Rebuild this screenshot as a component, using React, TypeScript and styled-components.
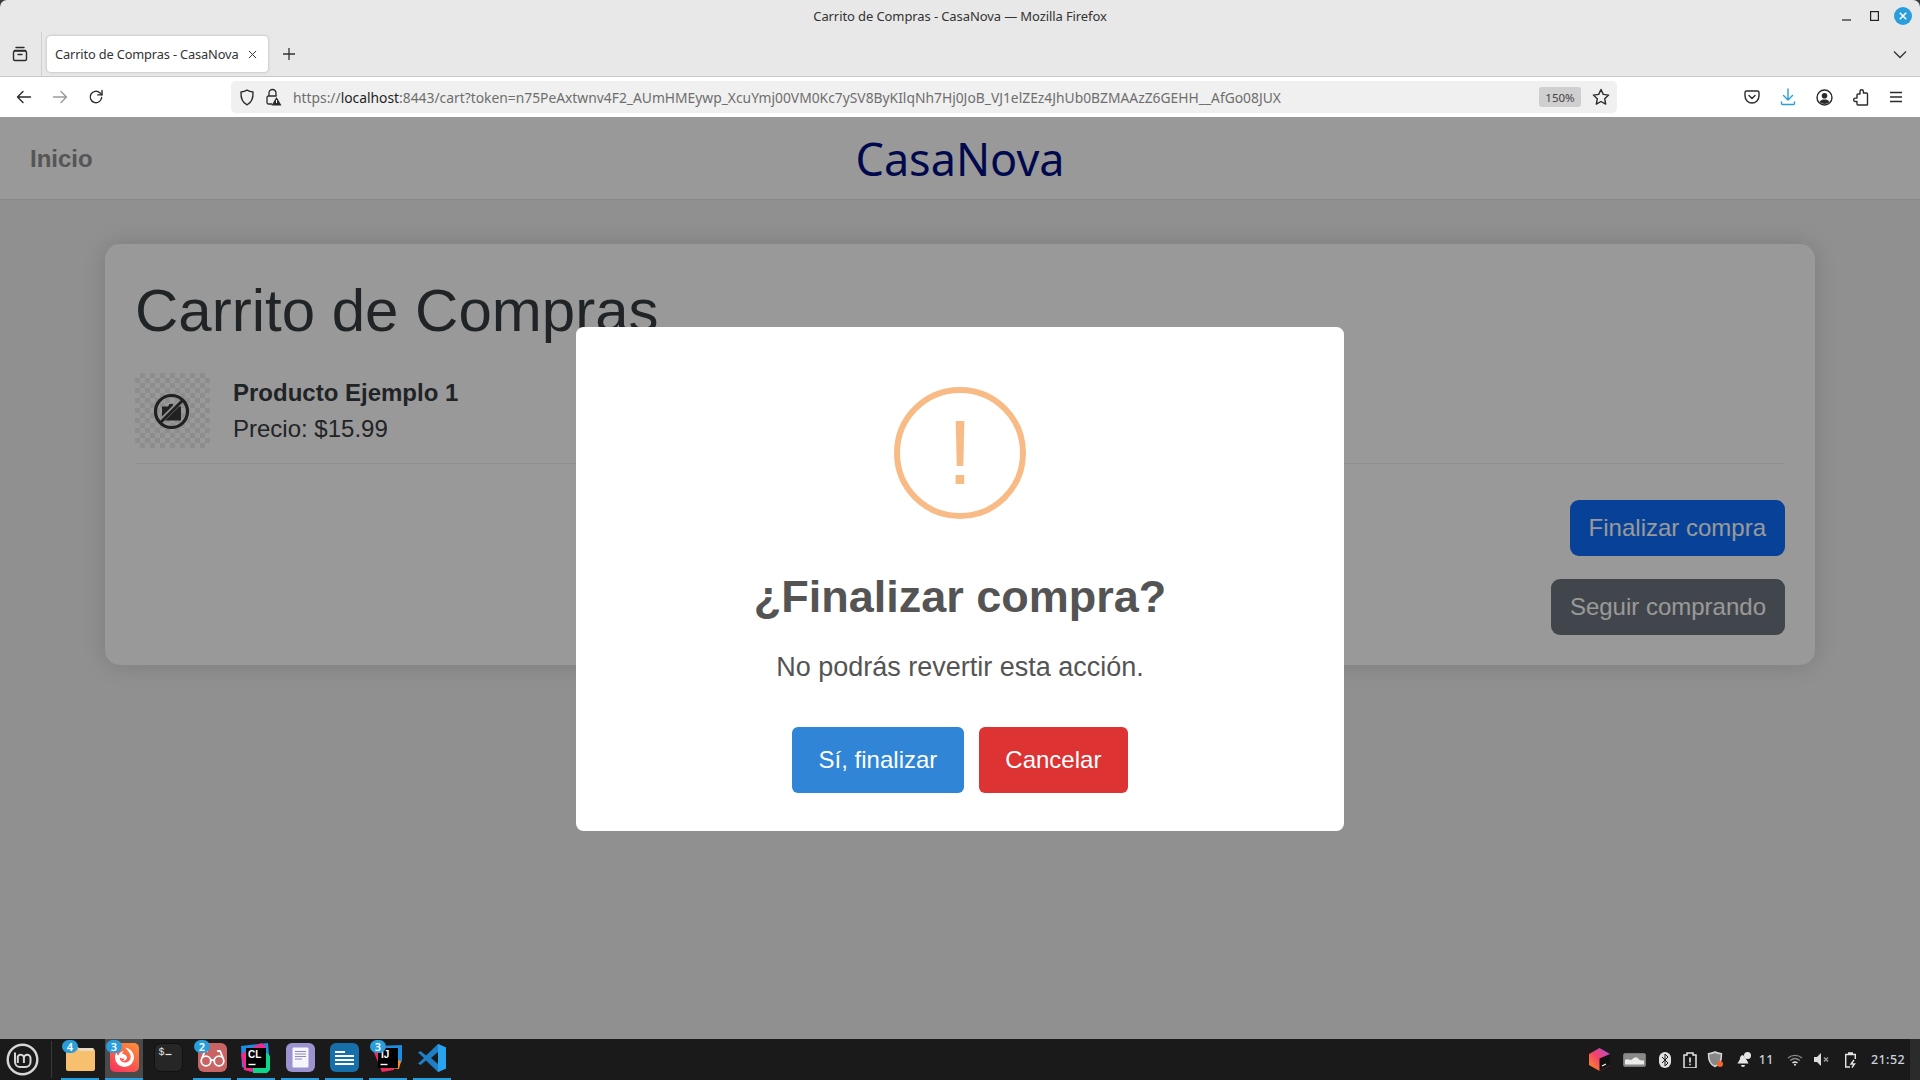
import React from 'react';
import styled, { createGlobalStyle } from 'styled-components';

const GlobalStyle = createGlobalStyle`
  html, body { margin: 0; padding: 0; background: #3a3a3a; }
  * { box-sizing: border-box; }
  #root { width: 1920px; height: 1080px; overflow: hidden; }
`;

const Desktop = styled.div`
  width: 1920px;
  height: 1080px;
  display: flex;
  flex-direction: column;
  font-family: "Liberation Sans", Arial, sans-serif;
`;

/* ---------- browser chrome ---------- */

const BrowserChrome = styled.header`
  flex: none;
  height: 117px;
  background: #e8e8e8;
  border-radius: 7px 7px 0 0;
  font-family: "Noto Sans", sans-serif;
  color: #2b2b2b;
`;

const TitleBar = styled.div`
  height: 32px;
  display: grid;
  grid-template-columns: 1fr auto 1fr;
  align-items: center;
`;

const WindowTitle = styled.div`
  grid-column: 2;
  font-size: 13px;
  letter-spacing: -0.1px;
  color: #333;
`;

const WindowControls = styled.div`
  grid-column: 3;
  justify-self: end;
  display: flex;
  align-items: center;
  gap: 12px;
  padding-right: 8px;
`;

const WindowButton = styled.div`
  width: 16px;
  height: 18px;
  display: flex;
  align-items: center;
  justify-content: center;
`;

const CloseButton = styled.div`
  width: 18px;
  height: 18px;
  border-radius: 50%;
  background: #2a9ddb;
  display: flex;
  align-items: center;
  justify-content: center;
`;

const TabRow = styled.div`
  height: 45px;
  display: flex;
  align-items: flex-start;
  border-bottom: 1px solid #c8c8c8;
`;

const TabsButton = styled.div`
  width: 42px;
  height: 44px;
  padding-right: 2px;
  border-right: 1px solid #cfcfcf;
  display: flex;
  align-items: center;
  justify-content: center;
`;

const Tab = styled.div`
  margin: 4px 0 0 5px;
  width: 221px;
  height: 36px;
  background: #fff;
  border-radius: 4px;
  box-shadow: 0 0 3px rgba(0, 0, 0, 0.25);
  display: flex;
  align-items: center;
  justify-content: space-between;
  padding: 0 11px 0 8px;
  font-size: 12.8px;
  letter-spacing: -0.14px;
  color: #333;
`;

const NewTab = styled.div`
  margin: 4px 0 0 8px;
  width: 26px;
  height: 36px;
  display: flex;
  align-items: center;
  justify-content: center;
`;

const TabListMenu = styled.div`
  margin: 4px 0 0 auto;
  width: 36px;
  height: 36px;
  padding-right: 4px;
  display: flex;
  align-items: center;
  justify-content: center;
`;

const Toolbar = styled.div`
  height: 40px;
  background: #fff;
  display: flex;
  align-items: center;
  justify-content: space-between;
  padding: 0 6px;
`;

const ToolGroup = styled.div`
  display: flex;
  align-items: center;
`;

const ToolButton = styled.div`
  width: 36px;
  height: 36px;
  display: flex;
  align-items: center;
  justify-content: center;
`;

const UrlBar = styled.div`
  width: 1386px;
  height: 32px;
  border-radius: 5px;
  background: #f0f0f0;
  display: flex;
  align-items: center;
  padding: 0 3px;
`;

const UrlIcon = styled.div`
  flex: none;
  width: 26px;
  display: flex;
  align-items: center;
  justify-content: center;
`;

const UrlText = styled.div`
  margin-left: 7px;
  flex: 1;
  font-size: 13.83px;
  white-space: nowrap;
  color: #6e6e6e;
  b { font-weight: 400; color: #1f1f1f; }
`;

const ZoomBadge = styled.div`
  width: 42px;
  height: 20px;
  margin-right: 7px;
  border-radius: 3px;
  background: #cfcfcf;
  font-size: 11.5px;
  color: #444;
  display: flex;
  align-items: center;
  justify-content: center;
`;

/* ---------- shop page ---------- */

const PageArea = styled.div`
  position: relative;
  flex: 1;
  min-height: 0;
  background: #f0f0f0;
`;

const SiteHeader = styled.div`
  height: 83px;
  background: #fff;
  border-bottom: 1px solid #dee2e6;
  display: grid;
  grid-template-columns: 1fr auto 1fr;
  align-items: center;
  padding: 0 30px;
`;

const HomeLink = styled.a`
  display: block;
  padding-top: 2px;
  font-size: 24px;
  font-weight: 700;
  color: #8e8e8e;
`;

const Brand = styled.div`
  font-family: "Noto Sans", sans-serif;
  font-size: 45px;
  line-height: 1;
  color: #001080;
`;

const CartCard = styled.section`
  margin: 44px 105px 0;
  padding: 31px 30px 30px;
  background: #fff;
  border-radius: 15px;
  box-shadow: 0 0 24px rgba(0, 0, 0, 0.14);
`;

const CartTitle = styled.h1`
  margin: 0 0 11px;
  font-size: 60px;
  line-height: 72px;
  font-weight: 400;
  color: #383c40;
`;

const CartItem = styled.div`
  display: flex;
  align-items: center;
  gap: 23px;
  padding: 15px 0;
  border-bottom: 1px solid #eceef0;
  font-size: 24px;
  line-height: 36px;
  color: #383c40;
`;

const ItemThumb = styled.div`
  width: 75px;
  height: 75px;
  padding: 1px 2px 0 0;
  border-radius: 8px;
  background: repeating-conic-gradient(#ececec 0 25%, #fff 0 50%) 0 0 / 10px 10px;
  display: flex;
  align-items: center;
  justify-content: center;
`;

const ItemName = styled.div`
  font-weight: 700;
`;

const CartActions = styled.div`
  margin-top: 36px;
  display: flex;
  flex-direction: column;
  align-items: flex-end;
  gap: 23px;
`;

const CartButton = styled.button<{ $tone: string }>`
  height: 56px;
  padding: 0 19px;
  border: 0;
  border-radius: 9px;
  font: 400 24px "Liberation Sans", Arial, sans-serif;
  color: #fff;
  background: ${(p) => p.$tone};
`;

/* ---------- confirm dialog ---------- */

const Backdrop = styled.div`
  position: absolute;
  inset: 0;
  padding-top: 2px;
  background: rgba(0, 0, 0, 0.4);
  display: flex;
  align-items: center;
  justify-content: center;
`;

const Dialog = styled.div`
  width: 768px;
  padding: 60px 0 38px;
  background: #fff;
  border-radius: 7.5px;
  display: flex;
  flex-direction: column;
  align-items: center;
  color: #545454;
`;

const WarningIcon = styled.div`
  width: 132px;
  height: 132px;
  border: 6px solid #f8bb86;
  border-radius: 50%;
  color: #f8bb86;
  font-size: 90px;
  line-height: 120px;
  text-align: center;
`;

const DialogTitle = styled.h2`
  margin: 52px 0 0;
  font-size: 45px;
  line-height: 52px;
  font-weight: 700;
`;

const DialogText = styled.p`
  margin: 24px 0 0;
  font-size: 27px;
  line-height: 40px;
`;

const DialogActions = styled.div`
  margin-top: 40px;
  display: flex;
  gap: 15px;
`;

const DialogButton = styled.button<{ $tone: string }>`
  height: 66px;
  padding: 0 26.5px;
  border: 0;
  border-radius: 6px;
  font: 400 24px "Liberation Sans", Arial, sans-serif;
  color: #fff;
  background: ${(p) => p.$tone};
`;

/* ---------- taskbar ---------- */

const Taskbar = styled.footer`
  flex: none;
  height: 41px;
  background: #1a1a1a;
  display: flex;
  align-items: stretch;
  font-family: "Noto Sans", sans-serif;
`;

const MenuButton = styled.div`
  width: 52px;
  border-right: 1px solid #3a3a3a;
  margin: 2px 0;
  padding-right: 6px;
  display: flex;
  align-items: center;
  justify-content: center;
`;

const TaskList = styled.div`
  margin-left: 9px;
  display: flex;
  gap: 6px;
`;

const TaskItem = styled.div<{ $open?: boolean; $active?: boolean }>`
  position: relative;
  width: 38px;
  display: flex;
  align-items: center;
  justify-content: center;
  padding-bottom: 2px;
  background: ${(p) => (p.$active ? '#4a4a4a' : 'transparent')};
  border-bottom: 2px solid ${(p) => (p.$open ? '#2a9ddb' : 'transparent')};
`;

const CountBadge = styled.span`
  position: absolute;
  top: 1px;
  left: 1px;
  width: 16px;
  height: 13px;
  border-radius: 7px;
  background: #2a9ddb;
  color: #fff;
  font-size: 11px;
  font-weight: 600;
  line-height: 13px;
  text-align: center;
`;

const Tray = styled.div`
  margin-left: auto;
  display: flex;
  align-items: center;
  color: #c9d3dc;
`;

const TrayItem = styled.div<{ $gap: number }>`
  margin-left: ${(p) => p.$gap}px;
  display: flex;
  align-items: center;
  font-size: 12.5px;
  font-weight: 500;
  letter-spacing: 0.4px;
`;

const TrayEdge = styled.div`
  width: 10px;
  margin-left: 5px;
  align-self: stretch;
  background: #2b2b2b;
`;

/* ---------- icons ---------- */

const Line = { fill: 'none', stroke: '#2b2b2b', strokeWidth: 1.4, strokeLinecap: 'round', strokeLinejoin: 'round' } as const;

const TabsIcon = () => (
  <svg width="18" height="18" viewBox="0 0 18 18" {...Line}>
    <path d="M5 2.5h8M3.5 5.5h11" />
    <rect x="2.5" y="6" width="13" height="9.5" rx="1.5" />
    <path d="M7 9.5h4" />
  </svg>
);
const CrossIcon = ({ size = 10, color = '#333', w = 1.1 }) => (
  <svg width={size} height={size} viewBox="0 0 10 10" fill="none" stroke={color} strokeWidth={w}>
    <path d="M1 1l8 8M9 1l-8 8" />
  </svg>
);
const PlusIcon = () => (
  <svg width="14" height="14" viewBox="0 0 14 14" fill="none" stroke="#333" strokeWidth="1.3">
    <path d="M7 1v12M1 7h12" />
  </svg>
);
const ChevronIcon = () => (
  <svg width="14" height="9" viewBox="0 0 14 9" fill="none" stroke="#333" strokeWidth="1.3">
    <path d="M1 1.5l6 6 6-6" />
  </svg>
);
const ArrowIcon = ({ right = false }) => (
  <svg width="16" height="14" viewBox="0 0 16 14" fill="none" stroke={right ? '#9a9a9a' : '#2b2b2b'} strokeWidth="1.4" strokeLinecap="round" strokeLinejoin="round">
    {right ? <path d="M1.5 7h13M9 1.5L14.5 7 9 12.5" /> : <path d="M14.5 7h-13M7 1.5L1.5 7 7 12.5" />}
  </svg>
);
const ReloadIcon = () => (
  <svg width="16" height="16" viewBox="0 0 16 16" {...Line}>
    <path d="M13.6 8.5a5.7 5.7 0 1 1-1.8-4.7L14 5.8" />
    <path d="M14 1.5v4.4H9.7" />
  </svg>
);
const ShieldIcon = () => (
  <svg width="16" height="17" viewBox="0 0 16 17" {...Line}>
    <path d="M8 1.2c2 1.2 4 1.7 6 1.8.3 5.5-1.4 10.6-6 12.8C3.4 13.6 1.7 8.5 2 3c2-.1 4-.6 6-1.8z" />
  </svg>
);
const LockIcon = () => (
  <svg width="17" height="18" viewBox="0 0 17 18">
    <path d="M4 8V5a3.5 3.5 0 0 1 7 0v3" fill="none" stroke="#2b2b2b" strokeWidth="1.3" />
    <path d="M7 16H3.5A1.5 1.5 0 0 1 2 14.5v-5A1.5 1.5 0 0 1 3.5 8h8" fill="none" stroke="#2b2b2b" strokeWidth="1.3" />
    <path d="M11.5 9l5 8.5h-10z" fill="#2b2b2b" />
    <path d="M11.5 12v3" stroke="#fff" strokeWidth="1" />
  </svg>
);
const StarIcon = () => (
  <svg width="18" height="18" viewBox="0 0 18 18" {...Line}>
    <path d="M9 1.5l2.3 4.9 5.3.7-3.9 3.7 1 5.3L9 13.5l-4.7 2.6 1-5.3-3.900-3.700 5.300-.7z" />
  </svg>
);
const PocketIcon = () => (
  <svg width="16" height="16" viewBox="0 0 16 16" {...Line}>
    <path d="M2.5 2h11A1.5 1.5 0 0 1 15 3.5V7A7 7 0 0 1 1 7V3.5A1.5 1.5 0 0 1 2.5 2z" />
    <path d="M5 6.5l3 3 3-3" />
  </svg>
);
const DownloadIcon = () => (
  <svg width="16" height="18" viewBox="0 0 16 18" fill="none" stroke="#2a9ddb" strokeWidth="1.4" strokeLinecap="round" strokeLinejoin="round">
    <path d="M8 1v10.5M3.5 7.5L8 12l4.500-4.500M1.500 14v1.500a1 1 0 0 0 1 1h11a1 1 0 0 0 1-1V14" />
  </svg>
);
const AccountIcon = () => (
  <svg width="17" height="17" viewBox="0 0 17 17">
    <circle cx="8.5" cy="8.5" r="7.5" fill="none" stroke="#2b2b2b" strokeWidth="1.4" />
    <circle cx="8.5" cy="6.8" r="2.8" fill="#2b2b2b" />
    <path d="M3.5 13c1-2 3-2.5 5-2.5s4 .5 5 2.5c-1.5 1.3-3.2 2-5 2s-3.500-.7-5-2z" fill="#2b2b2b" />
  </svg>
);
const ExtensionIcon = () => (
  <svg width="17" height="17" viewBox="0 0 17 17" {...Line}>
    <path d="M8 2.5a1.7 1.7 0 0 1 3.4 0V4h3.100a1 1 0 0 1 1 1v10.500a.5.500 0 0 1-.5.500H6a1 1 0 0 1-1-1v-2.500H3.300a1.700 1.700 0 0 1 0-3.400H5V6a1 1 0 0 1 1-1h2z" />
  </svg>
);
const MenuIcon = () => (
  <svg width="14" height="12" viewBox="0 0 14 12" fill="none" stroke="#2b2b2b" strokeWidth="1.3">
    <path d="M1 1.5h12M1 6h12M1 10.5h12" />
  </svg>
);
const NoImageIcon = () => (
  <svg width="37" height="37" viewBox="0 0 37 37">
    <path d="M9 13.5h6l1.500-2.500h3l1.500 2.500h7v14H9z" fill="#383838" />
    <path d="M9 27L27 9" stroke="#f6f6f6" strokeWidth="5" />
    <circle cx="18.5" cy="18.5" r="16" fill="none" stroke="#383838" strokeWidth="3.2" />
    <path d="M7 30L30 7" stroke="#383838" strokeWidth="3" />
  </svg>
);

const MintLogo = () => (
  <svg width="33" height="33" viewBox="0 0 33 33" fill="none" stroke="#d6d6d6">
    <circle cx="16.5" cy="16.5" r="14.8" strokeWidth="2.4" />
    <path d="M9 9.5V19a5 5 0 0 0 5 5h5.500a5 5 0 0 0 5-5v-4a3.300 3.300 0 0 0-6.600 0v5M18 15a3.300 3.300 0 0 0-6.200-1.500V20" strokeWidth="2" />
  </svg>
);
const FolderApp = () => (
  <svg width="30" height="28" viewBox="0 0 30 28">
    <path d="M1 4a2 2 0 0 1 2-2h9l3 3h13a2 2 0 0 1 2 2v18a2 2 0 0 1-2 2H3a2 2 0 0 1-2-2z" fill="#f6c06f" />
    <path d="M13 4h15.500v3H15z" fill="#e8dcc6" />
  </svg>
);
const FirefoxApp = () => (
  <svg width="29" height="29" viewBox="0 0 29 29">
    <defs>
      <linearGradient id="ffg" x1="0.8" y1="0" x2="0.2" y2="1">
        <stop offset="0" stopColor="#ff8a3a" />
        <stop offset="1" stopColor="#f7375b" />
      </linearGradient>
    </defs>
    <rect width="29" height="29" rx="5" fill="url(#ffg)" />
    <path d="M15 4.500c5.500 1 9 5 9 10a9.500 9.500 0 1 1-19 0c0-2.200.7-3.700 1.700-5 0 1.500.8 2.500 1.800 3 .5-2.500 2.500-4 5.500-4.500-1.500 1-1.800 2-1.500 3 2 .2 4.500 1.500 4.500 3.500 0 2.500-2.500 4-5 3.500 1.800-.5 2.500-1.500 2.200-2.800-1.700.8-3.500.3-4.300-.9-.4 3 2 5.200 5 5.200 3.500 0 5.800-2.500 5.800-5.500 0-4-3-6.500-5.700-9.500z" fill="#fff" />
  </svg>
);
const TerminalApp = () => (
  <svg width="29" height="29" viewBox="0 0 29 29">
    <rect x="0.5" y="0.5" width="28" height="28" rx="6" fill="#262626" stroke="#111" />
    <text x="4.5" y="11.5" fontSize="10" fill="#e8e8e8" fontFamily="Liberation Mono, monospace">$</text>
    <path d="M11.5 11.5h6" stroke="#e8e8e8" strokeWidth="1.2" />
  </svg>
);
const GlassesApp = () => (
  <svg width="29" height="29" viewBox="0 0 29 29">
    <rect width="29" height="29" rx="6" fill="#c86464" />
    <g fill="none" stroke="#fff" strokeWidth="1.8">
      <circle cx="8" cy="18" r="4.8" />
      <circle cx="21" cy="18" r="4.8" />
      <path d="M12.8 17.5c1-.8 2.400-.8 3.400 0M4 15l3-7h3M25 15l-3-7h-3" />
    </g>
  </svg>
);
const ClionApp = () => (
  <svg width="32" height="32" viewBox="0 0 32 32">
    <path d="M1 4l27-3 1 12-4 17-15-2-8-3z" fill="#1c8de0" />
    <path d="M1 12L4 28l8 2 8-6 6-20-5-3z" fill="#f02a8c" />
    <path d="M13 14l14-3 3 3v14l-3 3H13z" fill="#0bd689" />
    <rect x="6" y="6" width="20" height="20" fill="#000" />
    <text x="8" y="16" fontSize="10" fontWeight="700" fill="#fff" fontFamily="Liberation Sans, sans-serif">CL</text>
    <path d="M8.5 22.5h7" stroke="#fff" strokeWidth="1.4" />
  </svg>
);
const NotesApp = () => (
  <svg width="29" height="29" viewBox="0 0 29 29">
    <rect width="29" height="29" rx="6" fill="#9a93cf" />
    <rect x="6.5" y="4.5" width="16" height="20" rx="1" fill="#f5f5fb" />
    <path d="M9 8.5h11M9 11h11M9 13.5h11M9 16h7" stroke="#8f88c4" strokeWidth="1" />
  </svg>
);
const WriterApp = () => (
  <svg width="29" height="29" viewBox="0 0 29 29">
    <rect width="29" height="29" rx="6" fill="#176fa9" />
    <path d="M5 9h10M5 13h19M5 17h19M5 21h19" stroke="#fff" strokeWidth="1.8" />
  </svg>
);
const IdeaApp = () => (
  <svg width="32" height="32" viewBox="0 0 32 32">
    <path d="M6 4l24-1v16l-4 6-16-2z" fill="#1c8de0" />
    <path d="M1 8l9 22 12-2-4-18-6-8z" fill="#f02a5c" />
    <path d="M18 26l9 1 2-8-6-2z" fill="#ff8a1e" />
    <rect x="6" y="6" width="20" height="20" fill="#000" />
    <text x="9" y="16" fontSize="10" fontWeight="700" fill="#fff" fontFamily="Liberation Sans, sans-serif">IJ</text>
    <path d="M8.5 22.5h7" stroke="#fff" strokeWidth="1.4" />
  </svg>
);
const VsCodeApp = () => (
  <svg width="30" height="30" viewBox="0 0 30 30">
    <path d="M21 1l8 3.5v21L21 29 9 17.5 3.5 22 1 20.5 7 15 1 9.5 3.5 8 9 12.500z" fill="#1f7fc4" />
    <path d="M21 1l8 3.5v21L21 29z" fill="#2aa3ee" />
    <path d="M21 9l-7 6 7 6z" fill="#1a1a1a" />
  </svg>
);
const ToolboxTray = () => (
  <svg width="21" height="23" viewBox="0 0 21 23">
    <defs>
      <linearGradient id="tbg" x1="0" y1="1" x2="1" y2="0">
        <stop offset="0" stopColor="#ff9419" />
        <stop offset="0.5" stopColor="#f2426a" />
        <stop offset="1" stopColor="#b04de0" />
      </linearGradient>
    </defs>
    <path d="M10.5 0L21 6v11l-10.500 6L0 17V6z" fill="url(#tbg)" />
    <path d="M10.5 10.5L21 6v11l-10.500 6z" fill="#111" />
    <path d="M13 18l4-2" stroke="#fff" strokeWidth="1.2" />
  </svg>
);
const WeatherTray = () => (
  <svg width="23" height="14" viewBox="0 0 23 14">
    <rect x="0.5" y="0.5" width="22" height="13" rx="1.5" fill="#8a8a86" stroke="#777" />
    <path d="M2 7c3-2 4 1 7-.5 3-3 5-3 7 0 2 1 3 1 5 1v4H2z" fill="#ececec" />
  </svg>
);
const BluetoothTray = () => (
  <svg width="12" height="16" viewBox="0 0 12 16">
    <rect width="12" height="16" rx="6" fill="#e2e2e2" />
    <path d="M3 5l6 6-3 3V2l3 3-6 6" fill="none" stroke="#1a1a1a" strokeWidth="1" />
  </svg>
);
const ClipboardTray = () => (
  <svg width="14" height="16" viewBox="0 0 14 16">
    <path d="M1 3h3V1h6v2h3v13H1z" fill="none" stroke="#e6e6e6" strokeWidth="1.5" />
    <path d="M7 5.5v5M7 11.8v1.500" stroke="#e6e6e6" strokeWidth="1.6" />
  </svg>
);
const ShieldTray = () => (
  <svg width="17" height="17" viewBox="0 0 17 17">
    <path d="M8 1c2 1 4 1.5 6.500 1.700C14.700 9 13 13.500 8 15.500 3 13.500 1.300 9 1.500 2.700 4 2.500 6 2 8 1z" fill="#888" stroke="#d8d8d8" strokeWidth="1.4" />
    <circle cx="13" cy="13" r="3" fill="#f0672a" />
  </svg>
);
const BellTray = () => (
  <svg width="17" height="17" viewBox="0 0 17 17" fill="#e6e6e6">
    <path d="M7 4c-2.5.3-3 2.500-3.200 4.500L1.500 12.500h11L11 9.500" />
    <circle cx="11.5" cy="4.5" r="3.5" />
    <path d="M5 14h4a2 2 0 0 1-4 0z" />
  </svg>
);
const WifiTray = () => (
  <svg width="16" height="12" viewBox="0 0 16 12" fill="none" stroke="#8a8a8a" strokeWidth="1.4">
    <path d="M1 4c4-3.5 10-3.500 14 0M3.200 6.500c3-2.400 6.600-2.400 9.600 0" />
    <path d="M5.500 8.800c1.500-1 3.500-1 5 0" stroke="#e6e6e6" />
    <circle cx="8" cy="10.8" r="1" fill="#e6e6e6" stroke="none" />
  </svg>
);
const MuteTray = () => (
  <svg width="16" height="13" viewBox="0 0 16 13">
    <path d="M0 4h3l4-4v13L3 9H0z" fill="#dcdcdc" />
    <path d="M10 4.500l4 4M14 4.500l-4 4" stroke="#9a9a9a" strokeWidth="1.5" />
  </svg>
);
const BatteryTray = () => (
  <svg width="14" height="16" viewBox="0 0 14 16" fill="none" stroke="#e6e6e6" strokeWidth="1.4">
    <path d="M4 1h5M6 15H1.700V2.500h9.600V7" />
    <path d="M10 8l-3 4h3.500L8 15.500" />
  </svg>
);

const URL_TOKEN = 'n75PeAxtwnv4F2_AUmHMEywp_XcuYmj00VM0Kc7ySV8ByKIlqNh7Hj0JoB_VJ1elZEz4JhUb0BZMAAzZ6GEHH__AfGo08JUX';

const apps = [
  { icon: <FolderApp />, open: true, badge: '4' },
  { icon: <FirefoxApp />, open: true, active: true, badge: '3' },
  { icon: <TerminalApp /> },
  { icon: <GlassesApp />, open: true, badge: '2' },
  { icon: <ClionApp />, open: true },
  { icon: <NotesApp />, open: true },
  { icon: <WriterApp />, open: true },
  { icon: <IdeaApp />, open: true, badge: '3' },
  { icon: <VsCodeApp />, open: true },
];

const App = () => (
  <Desktop>
    <GlobalStyle />
    <BrowserChrome>
      <TitleBar>
        <WindowTitle>Carrito de Compras - CasaNova — Mozilla Firefox</WindowTitle>
        <WindowControls>
          <WindowButton>
            <svg width="9" height="9" viewBox="0 0 9 9" stroke="#222" strokeWidth="1.2"><path d="M0 8h9" /></svg>
          </WindowButton>
          <WindowButton>
            <svg width="9" height="10" viewBox="0 0 9 10" fill="none" stroke="#222" strokeWidth="1.2"><rect x="0.6" y="0.6" width="7.8" height="8.8" /></svg>
          </WindowButton>
          <CloseButton><CrossIcon size={8} color="#fff" w={2} /></CloseButton>
        </WindowControls>
      </TitleBar>
      <TabRow>
        <TabsButton><TabsIcon /></TabsButton>
        <Tab>
          Carrito de Compras - CasaNova
          <CrossIcon size={9} />
        </Tab>
        <NewTab><PlusIcon /></NewTab>
        <TabListMenu><ChevronIcon /></TabListMenu>
      </TabRow>
      <Toolbar>
        <ToolGroup>
          <ToolButton><ArrowIcon /></ToolButton>
          <ToolButton><ArrowIcon right /></ToolButton>
          <ToolButton><ReloadIcon /></ToolButton>
        </ToolGroup>
        <UrlBar>
          <UrlIcon><ShieldIcon /></UrlIcon>
          <UrlIcon><LockIcon /></UrlIcon>
          <UrlText>https://<b>localhost</b>:8443/cart?token={URL_TOKEN}</UrlText>
          <ZoomBadge>150%</ZoomBadge>
          <UrlIcon><StarIcon /></UrlIcon>
        </UrlBar>
        <ToolGroup>
          <ToolButton><PocketIcon /></ToolButton>
          <ToolButton><DownloadIcon /></ToolButton>
          <ToolButton><AccountIcon /></ToolButton>
          <ToolButton><ExtensionIcon /></ToolButton>
          <ToolButton><MenuIcon /></ToolButton>
        </ToolGroup>
      </Toolbar>
    </BrowserChrome>

    <PageArea>
      <SiteHeader>
        <HomeLink>Inicio</HomeLink>
        <Brand>CasaNova</Brand>
      </SiteHeader>
      <CartCard>
        <CartTitle>Carrito de Compras</CartTitle>
        <CartItem>
          <ItemThumb><NoImageIcon /></ItemThumb>
          <div>
            <ItemName>Producto Ejemplo 1</ItemName>
            <div>Precio: $15.99</div>
          </div>
        </CartItem>
        <CartActions>
          <CartButton $tone="#0d6efd">Finalizar compra</CartButton>
          <CartButton $tone="#6c757d">Seguir comprando</CartButton>
        </CartActions>
      </CartCard>
      <Backdrop>
        <Dialog>
          <WarningIcon>!</WarningIcon>
          <DialogTitle>¿Finalizar compra?</DialogTitle>
          <DialogText>No podrás revertir esta acción.</DialogText>
          <DialogActions>
            <DialogButton $tone="#3085d6">Sí, finalizar</DialogButton>
            <DialogButton $tone="#dd3333">Cancelar</DialogButton>
          </DialogActions>
        </Dialog>
      </Backdrop>
    </PageArea>

    <Taskbar>
      <MenuButton><MintLogo /></MenuButton>
      <TaskList>
        {apps.map((app, i) => (
          <TaskItem key={i} $open={app.open} $active={app.active}>
            {app.icon}
            {app.badge && <CountBadge>{app.badge}</CountBadge>}
          </TaskItem>
        ))}
      </TaskList>
      <Tray>
        <TrayItem $gap={0}><ToolboxTray /></TrayItem>
        <TrayItem $gap={12.5}><WeatherTray /></TrayItem>
        <TrayItem $gap={13}><BluetoothTray /></TrayItem>
        <TrayItem $gap={12}><ClipboardTray /></TrayItem>
        <TrayItem $gap={10}><ShieldTray /></TrayItem>
        <TrayItem $gap={12.5}><BellTray /></TrayItem>
        <TrayItem $gap={5.5}>11</TrayItem>
        <TrayItem $gap={13}><WifiTray /></TrayItem>
        <TrayItem $gap={11}><MuteTray /></TrayItem>
        <TrayItem $gap={14.7}><BatteryTray /></TrayItem>
        <TrayItem $gap={12.5}>21:52</TrayItem>
        <TrayEdge />
      </Tray>
    </Taskbar>
  </Desktop>
);

export default App;
